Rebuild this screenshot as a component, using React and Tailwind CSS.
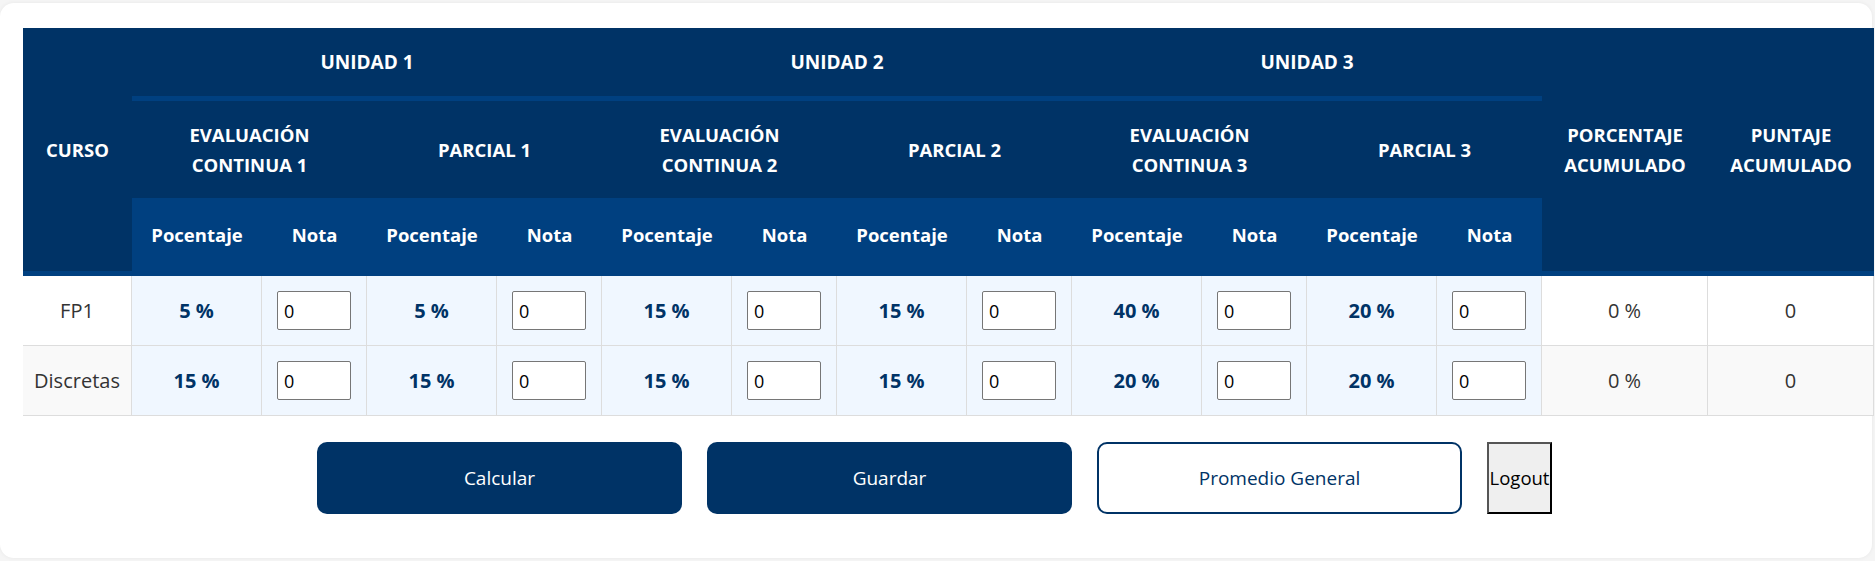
import React from 'react';

const units = [
  { name: 'UNIDAD 1', evals: ['EVALUACIÓN CONTINUA 1', 'PARCIAL 1'] },
  { name: 'UNIDAD 2', evals: ['EVALUACIÓN CONTINUA 2', 'PARCIAL 2'] },
  { name: 'UNIDAD 3', evals: ['EVALUACIÓN CONTINUA 3', 'PARCIAL 3'] },
];

const rows = [
  { curso: 'FP1', pct: [5, 5, 15, 15, 40, 20], striped: false },
  { curso: 'Discretas', pct: [15, 15, 15, 15, 20, 20], striped: true },
];

const App = () => {
  const font = { fontFamily: '"Open Sans", "Noto Sans", sans-serif' };

  return (
    <div className="h-[561px] bg-[#f5f5f5] pt-[3px] overflow-hidden" style={font}>
      <div className="w-[1872px] h-[555px] bg-white rounded-[14px] shadow-[0_0_4px_rgba(0,0,0,0.06)] pt-[25px] pl-[23px] pr-[26px] flex flex-col">
        {/* Tabla de notas */}
        <table className="table-fixed border-separate border-spacing-0 w-[1851px] shrink-0">
          <colgroup>
            <col className="w-[109px]" />
            {Array.from({ length: 6 }).map((_, i) => (
              <React.Fragment key={i}>
                <col className="w-[130px]" />
                <col className="w-[105px]" />
              </React.Fragment>
            ))}
            <col className="w-[166px]" />
            <col className="w-[166px]" />
          </colgroup>
          <thead className="text-white font-bold text-[18.5px] leading-[30px]">
            <tr className="h-[73px]">
              <th rowSpan={3} className="bg-[#003366] border-b-[5px] border-[#004080] align-middle">CURSO</th>
              {units.map((u) => (
                <th key={u.name} colSpan={4} className="bg-[#003366] border-b-[5px] border-[#004080] text-[19px]">
                  {u.name}
                </th>
              ))}
              <th rowSpan={3} className="bg-[#003366] border-b-[5px] border-[#004080] px-[12px]">
                PORCENTAJE ACUMULADO
              </th>
              <th rowSpan={3} className="bg-[#003366] border-b-[5px] border-[#004080] px-[12px]">
                PUNTAJE ACUMULADO
              </th>
            </tr>
            <tr className="h-[97px]">
              {units.flatMap((u) =>
                u.evals.map((e) => (
                  <th key={e} colSpan={2} className="bg-[#003366] px-[15px]">
                    {e}
                  </th>
                ))
              )}
            </tr>
            <tr className="h-[78px]">
              {Array.from({ length: 6 }).map((_, i) => (
                <React.Fragment key={i}>
                  <th className="bg-[#004080] border-b-[5px] border-[#004080]">Pocentaje</th>
                  <th className="bg-[#004080] border-b-[5px] border-[#004080]">Nota</th>
                </React.Fragment>
              ))}
            </tr>
          </thead>
          <tbody className="text-[20px]">
            {rows.map((r) => {
              const plain = r.striped ? 'bg-[#f9f9f9]' : 'bg-white';
              return (
                <tr key={r.curso} className="h-[70px]">
                  <td className={`${plain} text-[#333] text-center border-r border-b border-[#ddd]`}>{r.curso}</td>
                  {r.pct.map((p, i) => (
                    <React.Fragment key={i}>
                      <td className="bg-[#f0f7ff] text-[#003366] font-bold text-center border-r border-b border-[#ddd]">
                        {p} %
                      </td>
                      <td className="bg-[#f0f7ff] text-center border-r border-b border-[#ddd]">
                        <input
                          type="text"
                          defaultValue="0"
                          className="w-[74px] h-[39px] bg-white border border-[#767676] rounded-[2px] pl-[6px] text-[18px] text-black align-middle"
                          style={font}
                        />
                      </td>
                    </React.Fragment>
                  ))}
                  <td className={`${plain} text-[#333] text-center border-r border-b border-[#ddd]`}>0 %</td>
                  <td className={`${plain} text-[#333] text-center border-r border-b border-[#ddd]`}>0</td>
                </tr>
              );
            })}
          </tbody>
        </table>

        {/* Acciones */}
        <div className="flex justify-center gap-[25px] mt-[26px] text-[19px]">
          <button className="w-[365px] h-[72px] bg-[#003366] text-white rounded-[10px]">Calcular</button>
          <button className="w-[365px] h-[72px] bg-[#003366] text-white rounded-[10px]">Guardar</button>
          <button className="w-[365px] h-[72px] bg-white text-[#003366] border-2 border-[#003366] rounded-[10px]">
            Promedio General
          </button>
          <button className="w-[65px] h-[72px] bg-[#efefef] text-black border-2 border-t-[#555] border-l-[#555] border-r-black border-b-black whitespace-nowrap flex items-center justify-center overflow-visible px-0 text-[18.5px]">
            Logout
          </button>
        </div>
      </div>
    </div>
  );
};

export default App;
